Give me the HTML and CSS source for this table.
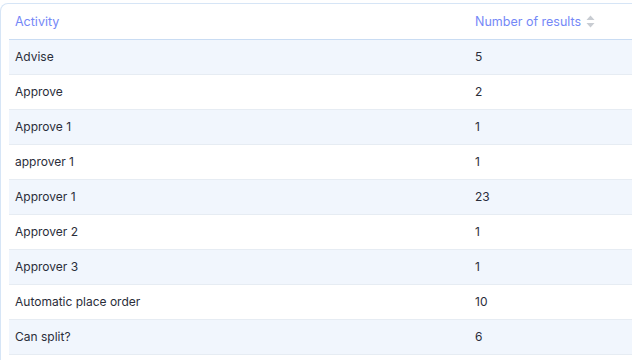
FILE: index.html
```html
<!DOCTYPE html>
<html>
<head>
<meta charset="utf-8">
<link rel="stylesheet" href="styles.css">
</head>
<body>
<div class="card">
  <table class="tbl">
    <thead>
      <tr>
        <th class="c1">Activity</th>
        <th class="c2"><span class="hd">Number of results
          <svg class="sort" width="9" height="13" viewBox="0 0 9 13"><path d="M4.5 0.5 L8.5 5 L0.5 5 Z" fill="#c8ccd2"/><path d="M0.5 8 L8.5 8 L4.5 12.5 Z" fill="#c8ccd2"/></svg></span></th>
        <th class="c3"></th>
      </tr>
    </thead>
    <tbody>
      <tr class="odd"><td>Advise</td><td>5</td><td></td></tr>
      <tr><td>Approve</td><td>2</td><td></td></tr>
      <tr class="odd"><td>Approve 1</td><td>1</td><td></td></tr>
      <tr><td>approver 1</td><td>1</td><td></td></tr>
      <tr class="odd"><td>Approver 1</td><td>23</td><td></td></tr>
      <tr><td>Approver 2</td><td>1</td><td></td></tr>
      <tr class="odd"><td>Approver 3</td><td>1</td><td></td></tr>
      <tr><td>Automatic place order</td><td>10</td><td></td></tr>
      <tr class="odd"><td>Can split?</td><td>6</td><td></td></tr>
    </tbody>
  </table>
</div>
</body>
</html>
```
FILE: styles.css
```css
html, body {
  margin: 0;
  padding: 0;
  background: #ffffff;
  overflow: hidden;
  width: 632px;
  height: 360px;
}
body {
  font-family: Inter, "Noto Sans", sans-serif;
  font-size: 12px;
  color: #2a2d3a;
}
.card {
  margin-top: 3px;
  width: 760px;
  border: 1px solid #d6e5f6;
  border-bottom: none;
  border-radius: 8px 0 0 0;
  padding: 0 0 0 8px;
  box-sizing: border-box;
  height: 357px;
}
.tbl {
  border-collapse: collapse;
  width: 720px;
  table-layout: fixed;
}
.c1 { width: 460px; }
.c2 { width: 200px; }
.tbl th {
  height: 35px;
  padding: 1px 6px 0;
  text-align: left;
  font-weight: 400;
  font-size: 12.5px;
  color: #7588f7;
  border-bottom: 1px solid #c9dcf3;
  box-sizing: border-box;
}
.hd {
  display: inline-flex;
  align-items: center;
  gap: 5px;
}
.sort { display: block; }
.tbl td {
  height: 35px;
  padding: 0 6px;
  box-sizing: border-box;
  border-bottom: 1px solid #e6ecf3;
  white-space: nowrap;
}
.tbl tr.odd td {
  background: #f1f6fd;
}
```
